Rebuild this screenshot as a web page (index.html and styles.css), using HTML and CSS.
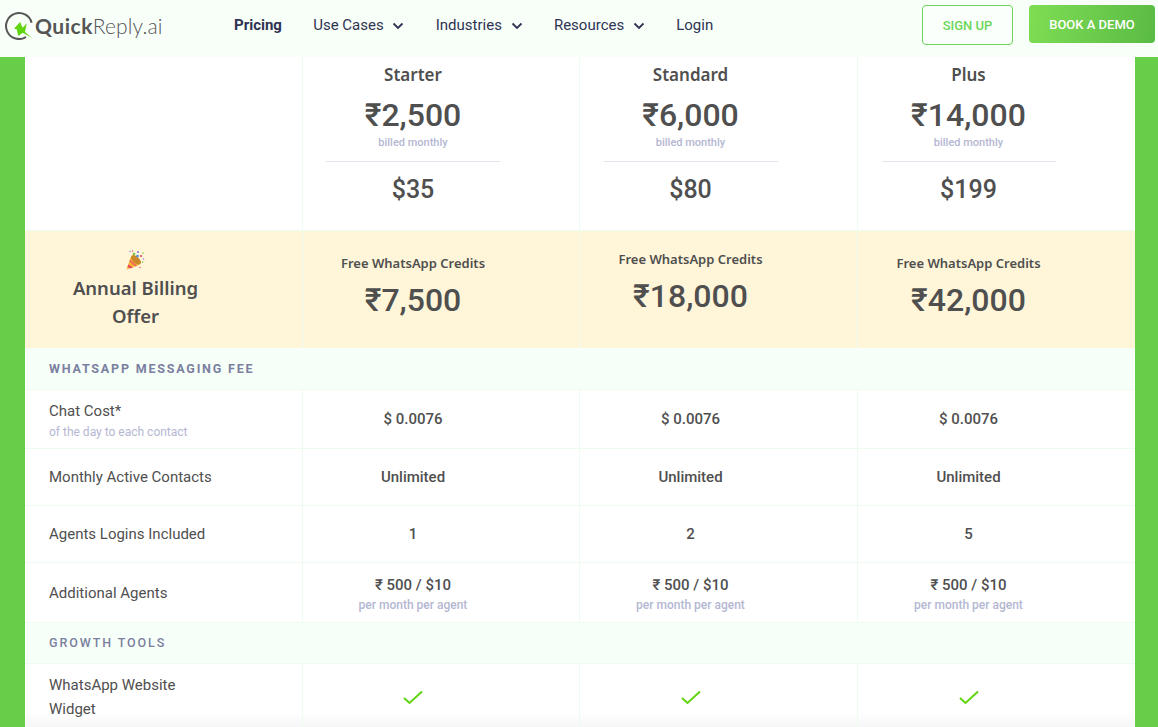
FILE: index.html
```html
<!DOCTYPE html>
<html lang="en">
<head>
<meta charset="utf-8">
<title>QuickReply.ai Pricing</title>
<link rel="stylesheet" href="styles.css">
</head>
<body>
<header class="topbar">
  <a class="logo">
    <svg class="logo-mark" width="30" height="30" viewBox="0 0 30 30" fill="none">
      <path d="M22 27A13 13 0 1 1 27.600 12.700" stroke="#555" stroke-width="2"/>
      <path d="M10 18.700L16 12L18.700 17.700L22.700 13.300L21 22L27.700 27.700L18.700 22.700L14.300 26L12.700 19.300Z" fill="#5fd40f"/>
    </svg>
    <span class="logo-text"><b>Quick</b>Reply.ai</span>
  </a>
  <nav class="nav">
    <a class="nav-item nav-active">Pricing</a>
    <a class="nav-item">Use Cases <svg class="chev" width="12" height="8" viewBox="0 0 12 8" fill="none"><path d="M1.500 1.500L6 6L10.500 1.500" stroke="#2f3353" stroke-width="1.800"/></svg></a>
    <a class="nav-item">Industries <svg class="chev" width="12" height="8" viewBox="0 0 12 8" fill="none"><path d="M1.500 1.500L6 6L10.500 1.500" stroke="#2f3353" stroke-width="1.800"/></svg></a>
    <a class="nav-item">Resources <svg class="chev" width="12" height="8" viewBox="0 0 12 8" fill="none"><path d="M1.500 1.500L6 6L10.500 1.500" stroke="#2f3353" stroke-width="1.800"/></svg></a>
    <a class="nav-item">Login</a>
  </nav>
  <div class="actions">
    <a class="btn btn-outline">SIGN UP</a>
    <a class="btn btn-solid">BOOK A DEMO</a>
  </div>
</header>

<main class="stage">
  <section class="table">
    <div class="row row-plans">
      <div class="cell"></div>
      <div class="cell plan">
        <div class="plan-name">Starter</div>
        <div class="price">₹2,500</div>
        <div class="billed">billed monthly</div>
        <div class="usd">$35</div>
      </div>
      <div class="cell plan">
        <div class="plan-name">Standard</div>
        <div class="price">₹6,000</div>
        <div class="billed">billed monthly</div>
        <div class="usd">$80</div>
      </div>
      <div class="cell plan">
        <div class="plan-name">Plus</div>
        <div class="price">₹14,000</div>
        <div class="billed">billed monthly</div>
        <div class="usd">$199</div>
      </div>
    </div>

    <div class="row row-offer">
      <div class="cell offer-title">
        <svg class="popper" width="22" height="22" viewBox="0 0 22 22">
          <path d="M1.500 20.500L6 7.500L15 15.500Z" fill="#f7b733"/>
          <path d="M3.300 15.500L8 18.600L5.500 19.400L2.500 18Z" fill="#e8455f"/>
          <path d="M5 10.500L12.300 16.700L10 17.400L4.400 12.400Z" fill="#ef6c57"/>
          <ellipse cx="11" cy="10.800" rx="6" ry="3.200" transform="rotate(42 11 10.800)" fill="#c9892b"/>
          <circle cx="9" cy="5" r="1.300" fill="#7ac143"/>
          <circle cx="13" cy="3" r="1.100" fill="#8e7be8"/>
          <circle cx="12.500" cy="7" r="1.300" fill="#4a90e2"/>
          <circle cx="16" cy="7" r="1.100" fill="#e8455f"/>
          <circle cx="18" cy="4" r="0.800" fill="#7ac143"/>
          <circle cx="5" cy="2.500" r="0.700" fill="#8e7be8"/>
          <circle cx="7.500" cy="2" r="0.700" fill="#e8455f"/>
          <circle cx="18.500" cy="10" r="0.800" fill="#8e7be8"/>
          <circle cx="17.500" cy="13" r="0.800" fill="#7ac143"/>
          <circle cx="15" cy="18.500" r="0.700" fill="#e8455f"/>
        </svg>
        <div class="offer-name">Annual Billing<br>Offer</div>
      </div>
      <div class="cell credit">
        <div class="credit-label">Free WhatsApp Credits</div>
        <div class="price">₹7,500</div>
      </div>
      <div class="cell credit credit-up">
        <div class="credit-label">Free WhatsApp Credits</div>
        <div class="price">₹18,000</div>
      </div>
      <div class="cell credit">
        <div class="credit-label">Free WhatsApp Credits</div>
        <div class="price">₹42,000</div>
      </div>
    </div>

    <div class="section-row">WHATSAPP MESSAGING FEE</div>

    <div class="row row-chat">
      <div class="cell label">Chat Cost*<small class="label-sub">of the day to each contact</small></div>
      <div class="cell value">$ 0.0076</div>
      <div class="cell value">$ 0.0076</div>
      <div class="cell value">$ 0.0076</div>
    </div>
    <div class="row row-contacts">
      <div class="cell label">Monthly Active Contacts</div>
      <div class="cell value">Unlimited</div>
      <div class="cell value">Unlimited</div>
      <div class="cell value">Unlimited</div>
    </div>
    <div class="row row-logins">
      <div class="cell label">Agents Logins Included</div>
      <div class="cell value">1</div>
      <div class="cell value">2</div>
      <div class="cell value">5</div>
    </div>
    <div class="row row-agents">
      <div class="cell label">Additional Agents</div>
      <div class="cell value">₹ 500 / $10<small class="value-sub">per month per agent</small></div>
      <div class="cell value">₹ 500 / $10<small class="value-sub">per month per agent</small></div>
      <div class="cell value">₹ 500 / $10<small class="value-sub">per month per agent</small></div>
    </div>

    <div class="section-row section-growth">GROWTH TOOLS</div>

    <div class="row row-widget">
      <div class="cell label label-wrap">WhatsApp Website<br>Widget</div>
      <div class="cell value"><svg class="check" width="20" height="15" viewBox="0 0 20 15" fill="none"><path d="M1 8L6.500 13L19 1.500" stroke="#5fd40f" stroke-width="2"/></svg></div>
      <div class="cell value"><svg class="check" width="20" height="15" viewBox="0 0 20 15" fill="none"><path d="M1 8L6.500 13L19 1.500" stroke="#5fd40f" stroke-width="2"/></svg></div>
      <div class="cell value"><svg class="check" width="20" height="15" viewBox="0 0 20 15" fill="none"><path d="M1 8L6.500 13L19 1.500" stroke="#5fd40f" stroke-width="2"/></svg></div>
    </div>
  </section>
</main>
</body>
</html>
```

FILE: styles.css
```css
* { box-sizing: border-box; }
html, body { margin: 0; height: 727px; overflow: hidden; }
body {
  font-family: Roboto, "Liberation Sans", sans-serif;
  color: #4f4f4f;
  background: #fff;
}

.topbar {
  height: 57px;
  display: flex;
  align-items: center;
  background: #f8fff9;
  padding: 0 3px 7px 4px;
}
.logo { display: flex; align-items: center; width: 230px; }
.logo-mark { margin-right: 1px; flex: none; }
.logo-text {
  font-family: Lato, "Open Sans", sans-serif;
  font-size: 21px;
  font-weight: 300;
  color: #555;
  letter-spacing: 0.1px;
}
.logo-text b { font-weight: 700; font-size: 21px; letter-spacing: 0.5px; }

.nav { display: flex; align-items: center; gap: 31.300px; flex: 1; }
.nav-item {
  font-size: 15px;
  color: #2f3353;
  display: flex;
  align-items: center;
  gap: 5px;
  white-space: pre;
}
.nav-active { font-weight: 700; }
.chev { margin-top: 1px; }

.actions { display: flex; align-items: center; gap: 16px; }
.btn {
  display: flex;
  align-items: center;
  justify-content: center;
  font-size: 13px;
  font-weight: 500;
  border-radius: 4px;
}
.btn-outline {
  width: 91px;
  height: 40px;
  border: 1px solid #6bd65a;
  color: #6bd65a;
  background: #fbfffb;
}
.btn-solid {
  width: 126px;
  height: 38px;
  margin-top: -2px;
  color: #fff;
  background: linear-gradient(100deg, #7fdd53, #5abb45);
}

.stage {
  height: 670px;
  padding: 0 23px 0 25px;
  background: #66cf47;
  overflow: hidden;
}
.table { background: #fff; }

.row {
  display: grid;
  grid-template-columns: 277px 277px 278px 278px;
  border-bottom: 1px solid #eefbef;
}
.cell { border-left: 1px solid #eefbef; }
.cell:first-child { border-left: 0; }

.row-plans { height: 173px; border-bottom: 0; }
.plan {
  display: flex;
  flex-direction: column;
  align-items: center;
  padding: 7px 56px 0 0;
}
.plan-name {
  font-family: "Noto Sans", "Open Sans", sans-serif;
  font-size: 17px;
  font-weight: 600;
  line-height: 22px;
}
.price {
  font-size: 32px;
  font-weight: 500;
  line-height: 38px;
  margin-top: 10px;
}
.billed {
  font-size: 11px;
  font-weight: 500;
  color: #b4b7d2;
  line-height: 13px;
  width: 174px;
  text-align: center;
  padding-bottom: 12px;
  border-bottom: 1px solid #e3e4ee;
  margin-top: 2px;
}
.usd { font-size: 25px; font-weight: 500; line-height: 30px; margin-top: 13px; }

.row-offer {
  height: 118px;
  background: #fff6d9;
  border-top: 1px solid #eefbef;
  border-bottom: 0;
}
.offer-title {
  display: flex;
  flex-direction: column;
  align-items: center;
  padding: 18px 56px 0 0;
}
.popper { flex: none; }
.offer-name {
  font-family: "Noto Sans", "Open Sans", sans-serif;
  font-size: 18.500px;
  font-weight: 600;
  line-height: 28px;
  text-align: center;
  margin-top: 3px;
}
.credit {
  display: flex;
  flex-direction: column;
  align-items: center;
  padding: 23px 56px 0 0;
}
.credit-up { padding-top: 19px; }
.credit-label {
  font-family: "Noto Sans", "Open Sans", sans-serif;
  font-size: 13px;
  font-weight: 600;
  line-height: 18px;
}
.credit .price { margin-top: 9px; }

.section-row {
  height: 42px;
  display: flex;
  align-items: center;
  padding-left: 24px;
  background: #f7fff9;
  border-bottom: 1px solid #eefbef;
  font-size: 12.500px;
  font-weight: 700;
  letter-spacing: 1.800px;
  color: #7b80a0;
}
.section-growth { height: 41px; font-weight: 500; letter-spacing: 1.900px; padding-bottom: 2px; }

.label {
  display: flex;
  flex-direction: column;
  justify-content: center;
  padding-left: 24px;
  font-size: 15px;
  line-height: 20px;
}
.label-sub { font-size: 12px; color: #b4b7d2; line-height: 23px; }
.value {
  display: flex;
  flex-direction: column;
  align-items: center;
  justify-content: center;
  padding-right: 56px;
  font-size: 15px;
  font-weight: 500;
}
.value-sub { font-size: 12px; font-weight: 500; color: #b4b7d2; margin-top: 4px; }

.row-chat { height: 59px; }
.row-chat .label { padding-top: 6px; }
.row-contacts { height: 57px; }
.row-logins { height: 57px; }
.row-agents { height: 60px; }
.row-agents .value { padding-top: 2px; }
.row-widget {
  height: 68px;
  border-bottom: 0;
  background: linear-gradient(#fff 48px, #f6f6f6 63px);
}
.label-wrap { line-height: 24px; padding-bottom: 2px; }
.check { display: block; margin-top: -2px; }
```
